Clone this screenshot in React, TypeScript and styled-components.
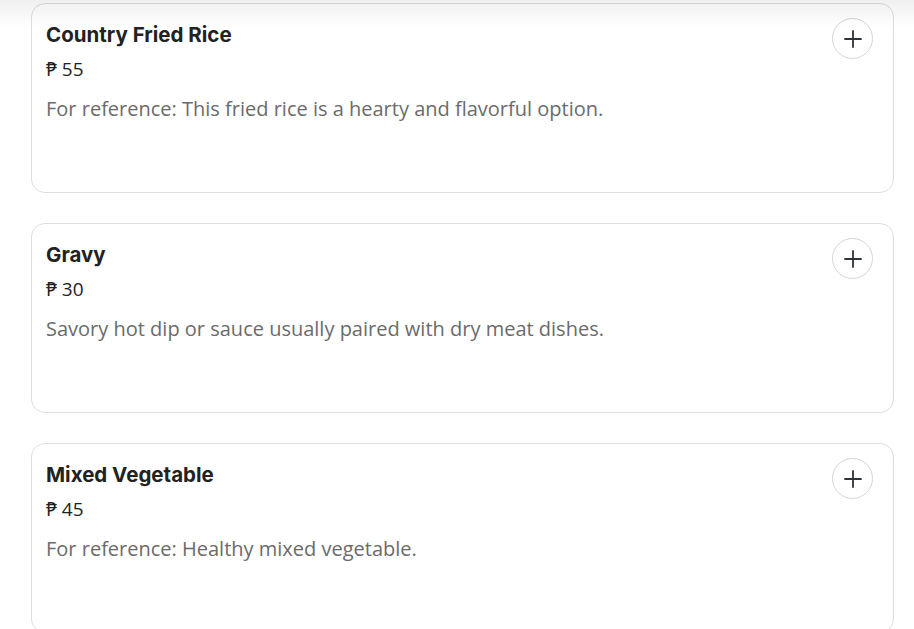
import React from "react";
import styled, { createGlobalStyle } from "styled-components";

const Global = createGlobalStyle`
  html, body { margin: 0; padding: 0; background: #ffffff; }
  body { font-family: "Open Sans", "Noto Sans", sans-serif; }
`;

const Page = styled.div`
  position: relative;
  padding: 3px 20px 0 31px;
  display: flex;
  flex-direction: column;
  gap: 30px;
`;

const TopShade = styled.div`
  position: fixed;
  top: 0;
  left: 0;
  right: 0;
  height: 28px;
  background: linear-gradient(to bottom, rgba(0,0,0,0.06), rgba(0,0,0,0));
  pointer-events: none;
  z-index: 5;
`;

const Card = styled.div`
  box-sizing: border-box;
  height: 190px;
  border: 1px solid #dedede;
  border-radius: 14px;
  background: #fff;
  padding: 18px 20px 0 14px;
  display: flex;
  justify-content: space-between;
  align-items: flex-start;
`;

const Info = styled.div`
  display: flex;
  flex-direction: column;
`;

const Title = styled.div`
  font-family: "Inter", sans-serif;
  font-weight: 700;
  font-size: 20.5px;
  letter-spacing: 0;
  color: #222222;
  line-height: 26px;
`;

const Price = styled.div`
  margin-top: 9px;
  font-size: 19px;
  color: #222222;
  line-height: 24px;
`;

const Desc = styled.div`
  margin-top: 15px;
  font-size: 20px;
  color: #6b6b6b;
  line-height: 26px;
`;

const AddButton = styled.button`
  width: 41px;
  height: 41px;
  border-radius: 50%;
  border: 1px solid #d2d6d9;
  background: #fff;
  display: flex;
  align-items: center;
  justify-content: center;
  padding: 0;
  margin-top: -4px;
  cursor: pointer;
`;

const items = [
  { name: "Country Fried Rice", price: 55, desc: "For reference: This fried rice is a hearty and flavorful option." },
  { name: "Gravy", price: 30, desc: "Savory hot dip or sauce usually paired with dry meat dishes." },
  { name: "Mixed Vegetable", price: 45, desc: "For reference: Healthy mixed vegetable." },
];

const Plus = () => (
  <svg width="20" height="20" viewBox="0 0 20 20">
    <path d="M10 2v16M2 10h16" stroke="#2e3338" strokeWidth="1.8" strokeLinecap="round" fill="none" />
  </svg>
);

export default function App() {
  return (
    <>
      <Global />
      <TopShade />
      <Page>
        {items.map((it) => (
          <Card key={it.name}>
            <Info>
              <Title>{it.name}</Title>
              <Price>₱ {it.price}</Price>
              <Desc>{it.desc}</Desc>
            </Info>
            <AddButton aria-label="Add">
              <Plus />
            </AddButton>
          </Card>
        ))}
      </Page>
    </>
  );
}
